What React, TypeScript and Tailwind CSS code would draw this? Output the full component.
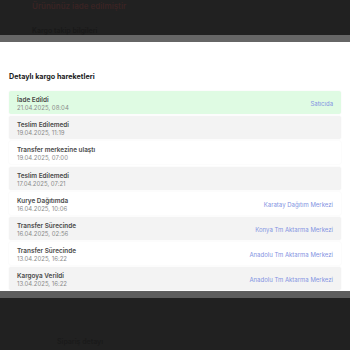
import React from 'react';

interface Movement {
  status: string;
  date: string;
  location?: string;
}

const movements: Movement[] = [
  { status: 'İade Edildi', date: '21.04.2025, 08:04', location: 'Satıcıda' },
  { status: 'Teslim Edilemedi', date: '19.04.2025, 11:19' },
  { status: 'Transfer merkezine ulaştı', date: '19.04.2025, 07:00' },
  { status: 'Teslim Edilemedi', date: '17.04.2025, 07:21' },
  { status: 'Kurye Dağıtımda', date: '16.04.2025, 10:06', location: 'Karatay Dağıtım Merkezi' },
  { status: 'Transfer Sürecinde', date: '16.04.2025, 02:56', location: 'Konya Tm Aktarma Merkezi' },
  { status: 'Transfer Sürecinde', date: '13.04.2025, 16:22', location: 'Anadolu Tm Aktarma Merkezi' },
  { status: 'Kargoya Verildi', date: '13.04.2025, 16:22', location: 'Anadolu Tm Aktarma Merkezi' },
];

export default function App() {
  return (
    <div className="w-[350px] h-[350px] overflow-hidden bg-[#212121] flex flex-col font-['Inter',sans-serif]">
      {/* dimmed page behind the sheet */}
      <div className="h-[38px] px-[32px] pt-[1px] flex flex-col justify-between">
        <span className="text-[8px] leading-[10px] text-[#3a2424] font-semibold">Ürününüz iade edilmiştir</span>
        <span className="text-[7px] leading-[8px] text-[#191919] font-semibold">Kargo takip bilgileri</span>
      </div>
      <div className="h-[7px] bg-[#666666]" />

      <div className="bg-white h-[266px] px-[9px] pt-[30px]">
        <h2 className="text-[7.2px] leading-[10px] font-bold text-[#222]">Detaylı kargo hareketleri</h2>
        <div className="mt-[9px] flex flex-col gap-[2.2px]">
          {movements.map((m, i) => (
            <div
              key={i}
              className={`h-[23px] px-[8px] flex items-center justify-between rounded-[2px] shadow-[0_0_2px_rgba(0,0,0,0.06)] ${
                i === 0 ? 'bg-[#dffbe3]' : i % 2 === 1 ? 'bg-[#f3f3f3]' : 'bg-white'
              }`}
            >
              <div className="flex flex-col mt-[3px]">
                <span className="text-[6.4px] leading-[8px] font-semibold text-[#4a4a4a]">{m.status}</span>
                <span className="text-[6px] leading-[8px] text-[#8a8a8a]">{m.date}</span>
              </div>
              {m.location && (
                <span className="text-[6px] leading-[8px] text-[#8393e2] mt-[3px]">{m.location}</span>
              )}
            </div>
          ))}
        </div>
      </div>

      <div className="h-[7px] bg-[#5e5e5e]" />
      <div className="flex-1 px-[57px] pt-[28px]">
        <span className="text-[7px] leading-[8px] text-[#1a1a1a] font-semibold">Sipariş detayı</span>
      </div>
    </div>
  );
}
